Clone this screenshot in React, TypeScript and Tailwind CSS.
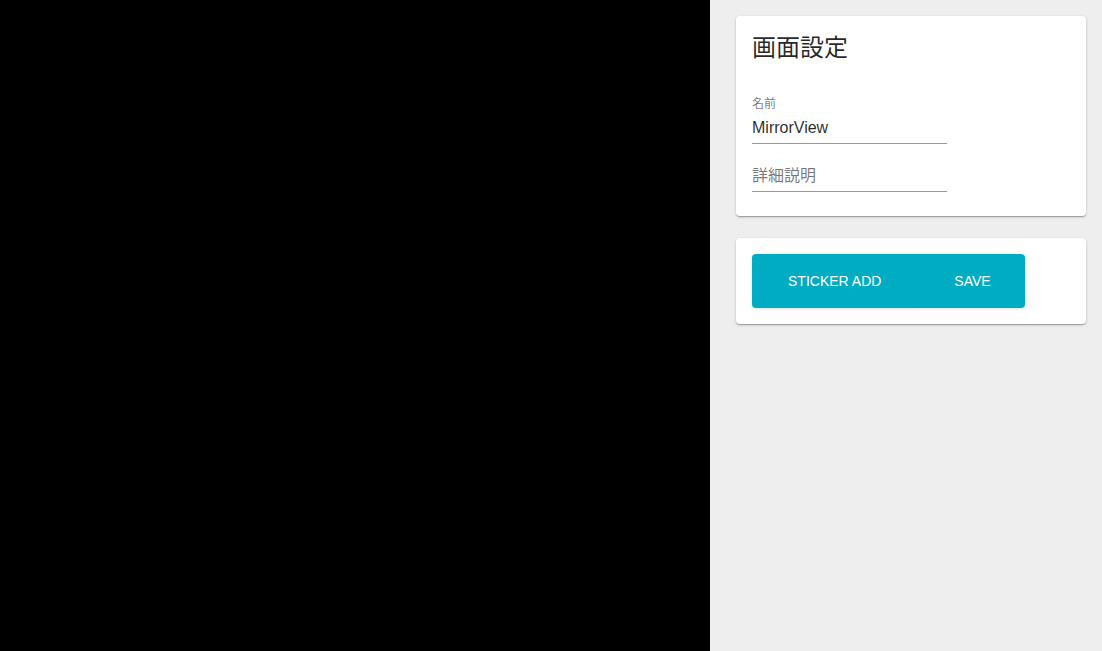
const fieldFont = { fontFamily: '"Liberation Sans", Arial, "Noto Sans CJK JP", sans-serif' };

function TextField({ label, value }: { label: string; value?: string }) {
  return (
    <div className="relative h-12 w-[195px]">
      {value ? (
        <>
          <span className="absolute left-0 top-0 text-[12px] leading-[16px] text-black/55">{label}</span>
          <div className="absolute bottom-0 left-0 right-0 flex h-8 items-center pb-px text-[16px] text-black/85">
            {value}
          </div>
        </>
      ) : (
        <div className="absolute bottom-0 left-0 right-0 flex h-8 items-center pb-px text-[16px] text-black/55">
          {label}
        </div>
      )}
      <div className="absolute bottom-0 left-0 right-0 h-px bg-black/40" />
    </div>
  );
}

export default function App() {
  return (
    <div className="flex h-[651px] w-full" style={fieldFont}>
      <div className="h-full w-[710px] shrink-0 bg-black" />
      <aside className="flex flex-1 flex-col gap-[22px] bg-[#eeeeee] px-[26px] py-4 pr-4">
        <section className="flex flex-col rounded bg-white px-4 pb-6 pt-4 shadow-[0_1px_3px_rgba(0,0,0,0.2),0_1px_1px_rgba(0,0,0,0.14),0_2px_1px_-1px_rgba(0,0,0,0.12)]">
          <h1 className="h-8 text-[24px] font-normal leading-8 text-black/85">画面設定</h1>
          <div className="mt-8 flex flex-col">
            <TextField label="名前" value="MirrorView" />
            <TextField label="詳細説明" />
          </div>
        </section>
        <section className="rounded bg-white p-4 shadow-[0_1px_3px_rgba(0,0,0,0.2),0_1px_1px_rgba(0,0,0,0.14),0_2px_1px_-1px_rgba(0,0,0,0.12)]">
          <div className="flex w-fit rounded shadow-[0_1px_3px_rgba(0,0,0,0.12)]">
            <button
              type="button"
              className="h-[54px] rounded-l bg-[#00acc1] pl-9 pr-[33px] text-[14px] font-normal uppercase text-white shadow-[1px_0_1px_rgba(0,0,0,0.04)]"
            >
              Sticker Add
            </button>
            <button
              type="button"
              className="h-[54px] rounded-r bg-[#00acc1] pl-10 pr-[34px] text-[14px] font-normal uppercase text-white"
            >
              Save
            </button>
          </div>
        </section>
      </aside>
    </div>
  );
}
